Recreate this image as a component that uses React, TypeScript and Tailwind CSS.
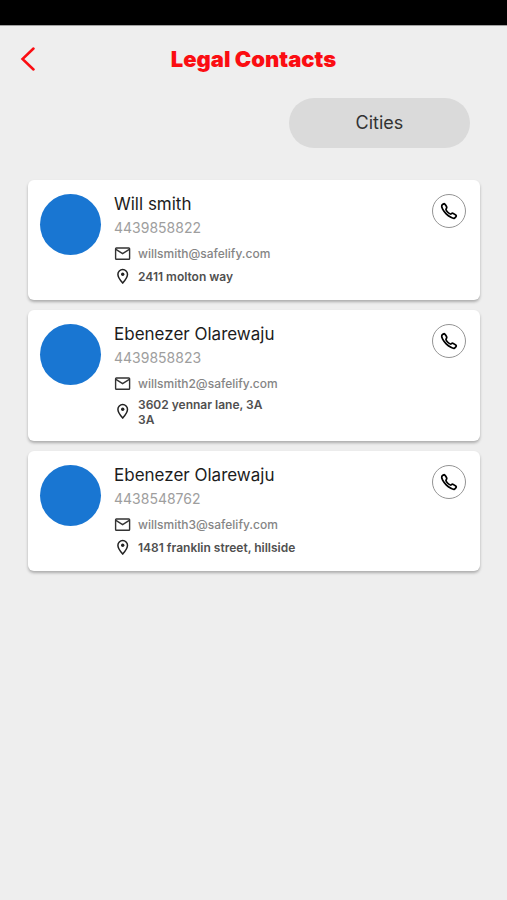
import { IoCallOutline } from "react-icons/io5";

type Contact = {
  name: string;
  phone: string;
  email: string;
  address: string[];
};

const contacts: Contact[] = [
  { name: "Will smith", phone: "4439858822", email: "willsmith@safelify.com", address: ["2411 molton way"] },
  { name: "Ebenezer Olarewaju", phone: "4439858823", email: "willsmith2@safelify.com", address: ["3602 yennar lane, 3A", "3A"] },
  { name: "Ebenezer Olarewaju", phone: "4438548762", email: "willsmith3@safelify.com", address: ["1481 franklin street, hillside"] },
];

function MailIcon() {
  return (
    <svg viewBox="0 0 18 18" aria-hidden="true" className="size-[18px] shrink-0 text-[#333333]" fill="none" stroke="currentColor" strokeWidth="1.4" strokeLinejoin="round">
      <rect x="1.6" y="3" width="14" height="11.2" rx="0.8" />
      <path d="M1.9 4.4 8.6 8.7l6.7-4.3" />
    </svg>
  );
}

function PinIcon() {
  return (
    <svg viewBox="0 0 18 18" aria-hidden="true" className="size-[18px] shrink-0 text-[#222222]" fill="none" stroke="currentColor" strokeWidth="1.5" strokeLinejoin="round">
      <path d="M8.7 1.5a4.8 4.8 0 0 0-4.8 4.8c0 3.4 4.8 8.8 4.8 8.8s4.8-5.4 4.8-8.8a4.8 4.8 0 0 0-4.8-4.8Z" />
      <circle cx="8.7" cy="6.3" r="1.7" fill="currentColor" stroke="none" />
    </svg>
  );
}

function ContactCard({ contact }: { contact: Contact }) {
  return (
    <li className="flex items-start rounded-md bg-white px-3 py-[14px] shadow-[0_2px_3px_rgba(0,0,0,0.28)]">
      <div className="size-[61px] shrink-0 rounded-full bg-[#1976d2]" />
      <div className="ml-[13px] min-w-0 flex-1">
        <h2 className="text-[17px] leading-5 text-[#1c1c1c]">{contact.name}</h2>
        <p className="mt-1 text-sm leading-5 text-[#9e9e9e]">{contact.phone}</p>
        <div className="mt-[7px] flex items-center gap-[6px]">
          <MailIcon />
          <a href={`mailto:${contact.email}`} className="text-xs leading-[18px] font-medium text-[#858585]">
            {contact.email}
          </a>
        </div>
        <div className="mt-1 flex min-h-[19px] items-center gap-[6px]">
          <PinIcon />
          <address className="text-xs leading-[15px] font-semibold text-[#505050] not-italic">
            {contact.address.map((line) => (
              <span key={line} className="block">{line}</span>
            ))}
          </address>
        </div>
      </div>
      <button
        type="button"
        aria-label={`Call ${contact.name}`}
        className="mr-[2px] flex size-[34px] shrink-0 items-center justify-center rounded-full border border-[#949494] text-black"
      >
        <IoCallOutline className="size-[18px] [&_path]:[stroke-width:50px]" />
      </button>
    </li>
  );
}

export default function App() {
  return (
    <div className="min-h-screen bg-[#eeeeee] font-['Inter',sans-serif]">
      <div className="h-[26px] border-b border-[#a0a0a0] bg-black" />
      <header className="grid grid-cols-[1fr_auto_1fr] items-center px-5 pt-[15px]">
        <button type="button" aria-label="Back" className="flex h-9 w-9 items-center text-[#fb0d12]">
          <svg viewBox="0 0 16 24" className="h-6 w-4" fill="none" stroke="currentColor" strokeWidth="2.5" strokeLinecap="round">
            <path d="M13.5 1.5 2.5 12l11 10.5" />
          </svg>
        </button>
        <h1 className="text-[22px] leading-7 font-black text-[#fb0d12]">Legal Contacts</h1>
      </header>
      <main className="pt-[21px] pr-[27px] pl-7">
        <div className="flex justify-end pr-[10px]">
          <button type="button" className="h-[50px] w-[181px] rounded-full bg-[#dadada] text-lg text-[#333333]">
            Cities
          </button>
        </div>
        <ul className="mt-8 flex flex-col gap-[10px]">
          {contacts.map((contact) => (
            <ContactCard key={contact.phone} contact={contact} />
          ))}
        </ul>
      </main>
    </div>
  );
}
